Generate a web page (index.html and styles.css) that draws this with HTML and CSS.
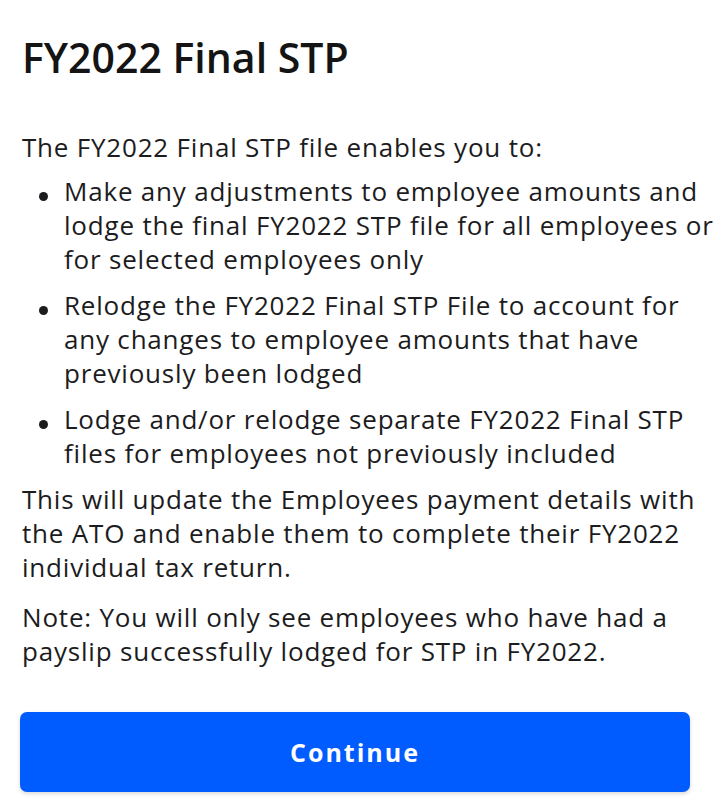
FILE: index.html
```html
<!DOCTYPE html>
<html>
<head>
<meta charset="utf-8">
<link rel="stylesheet" href="styles.css">
</head>
<body>
<main class="page">
  <h1 class="title">FY2022 Final STP</h1>
  <p class="intro">The FY2022 Final STP file enables you to:</p>
  <ul class="list">
    <li>Make any adjustments to employee amounts and<br>lodge the final FY2022 STP file for all employees or<br>for selected employees only</li>
    <li>Relodge the FY2022 Final STP File to account for<br>any changes to employee amounts that have<br>previously been lodged</li>
    <li>Lodge and/or relodge separate FY2022 Final STP<br>files for employees not previously included</li>
  </ul>
  <p class="para">This will update the Employees payment details with<br>the ATO and enable them to complete their FY2022<br>individual tax return.</p>
  <p class="para note">Note: You will only see employees who have had a<br>payslip successfully lodged for STP in FY2022.</p>
  <button class="btn">Continue</button>
</main>
</body>
</html>
```

FILE: styles.css
```css
html, body {
  margin: 0;
  padding: 0;
  background: #ffffff;
}
body {
  width: 720px;
  height: 802px;
  overflow: hidden;
  font-family: "Open Sans", "Noto Sans", sans-serif;
  color: #1c1c1e;
}
.page {
  padding: 32px 0 0 22px;
  display: flex;
  flex-direction: column;
}
.title {
  margin: 0;
  font-size: 41px;
  line-height: 50px;
  font-weight: 600;
  color: #141414;
  white-space: nowrap;
}
.intro {
  margin: 48px 0 0 0;
  font-size: 26px;
  line-height: 34px;
  letter-spacing: 0.8px;
  white-space: nowrap;
}
.list {
  margin: 10px 0 0 0;
  padding: 0 0 0 42px;
  list-style: none;
}
.list li {
  position: relative;
  font-size: 26px;
  line-height: 34px;
  letter-spacing: 0.8px;
  white-space: nowrap;
  margin-bottom: 12px;
}
.list li::before {
  content: "";
  position: absolute;
  left: -25px;
  top: 18px;
  width: 9px;
  height: 9px;
  border-radius: 50%;
  background: #1c1c1e;
}
.para {
  margin: 0 0 16px 0;
  font-size: 26px;
  line-height: 34px;
  letter-spacing: 0.8px;
  white-space: nowrap;
}
.btn {
  margin: 28px 0 0 -2px;
  width: 670px;
  height: 80px;
  border: none;
  border-radius: 7px;
  background: #005cff;
  color: #ffffff;
  font-family: inherit;
  font-size: 25px;
  font-weight: 700;
  letter-spacing: 2px;
  box-shadow: 0 2px 4px rgba(0,0,0,0.15);
}
```
